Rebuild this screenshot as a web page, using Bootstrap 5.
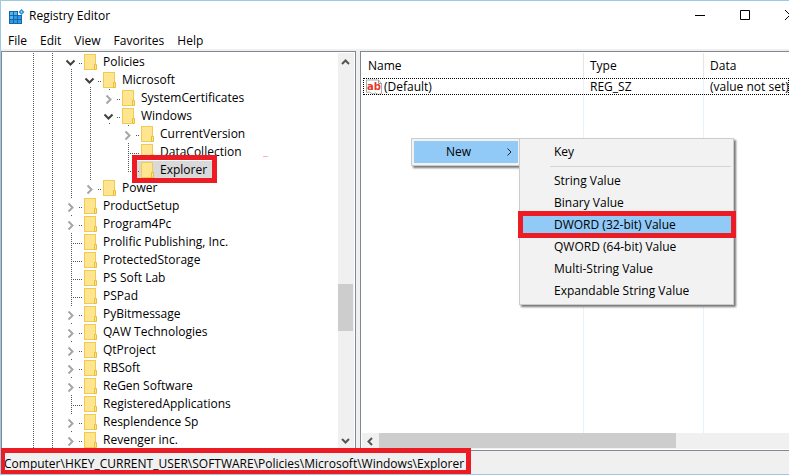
<!DOCTYPE html>
<html lang="en">
<head>
<meta charset="utf-8">
<meta name="viewport" content="width=device-width, initial-scale=1">
<title>Registry Editor</title>
<link href="https://cdn.jsdelivr.net/npm/bootstrap@5.3.0/dist/css/bootstrap.min.css" rel="stylesheet">
<style>
  :root { --line: #828790; --face: #f0f0f0; --hot: #91c9f7; --mark: #ed1c24; }
  body { font: 12px/18px "Open Sans", "Noto Sans", sans-serif; color: #000; background: #fff; }
  .app { border: 1px solid #9fc9e0; border-right: 0; }
  .title-bar { height: 30px; padding-left: 8px; }
  .title-text { font-size: 12px; line-height: 18px; font-weight: 400; padding-top: 6px; }
  .win-controls { margin-right: -23px; }
  .win-btn { width: 45px; height: 28px; border: 0; background: none; padding: 0; display: grid; place-items: center; }
  .menu-bar { height: 18px; padding-left: 7px; gap: 13px; line-height: 20px; }
  .menu-bar a { color: #000; text-decoration: none; }
  .panes { border-top: 2px solid var(--face); min-height: 0; }
  .tree-pane { width: 355px; border: 1px solid var(--line); border-bottom: 0; }
  .tree { padding: 1px 0 0 22px; }
  .tree-row { height: 18px; position: relative; }
  .guide { width: 19px; height: 18px; flex: none; }
  .guide.dots { background: repeating-linear-gradient(#555 0 1px, transparent 1px 2px) 9px 0 / 1px 100% no-repeat; }
  .twist { width: 22px; height: 18px; flex: none; }
  .folder { width: 14px; height: 18px; flex: none; }
  .tree-row .name { padding: 0 5px; }
  .selected-name, .selected-row .folder { background: #d9d9d9; }
  .selected-row .twist { background: linear-gradient(#d9d9d9, #d9d9d9) right / 4px 100% no-repeat; }
  .v-track { width: 17px; background: var(--face); border-right: 1px solid #fff; margin: 1px 0; }
  .scroll-btn { border: 0; padding: 0; background: var(--face); display: grid; place-items: center; flex: none; }
  .v-track .scroll-btn { width: 15px; height: 17px; }
  .v-thumb { height: 47px; width: 15px; background: #cdcdcd; }
  .v-before { flex: 214 1 0; }
  .v-after { flex: 101 1 0; }
  .splitter { width: 4px; background: var(--face); }
  .list-pane { border: 1px solid var(--line); border-right: 0; border-bottom: 0; padding-top: 1px; }
  .values { padding-left: 2px; background: linear-gradient(#e8f2fb, #e8f2fb) 222px 0 / 1px 100% no-repeat, linear-gradient(#e8f2fb, #e8f2fb) 342px 0 / 1px 100% no-repeat; }
  .values table { width: 100%; table-layout: fixed; border-collapse: separate; border-spacing: 0; }
  .values th { font-weight: 400; height: 25px; padding: 0 6px; border-right: 1px solid #e5e5e5; background: #fff; }
  .values th:first-child { padding-left: 5px; }
  .values th:last-child { border-right: 0; }
  .values td { height: 17px; line-height: 16px; padding: 0 6px; white-space: nowrap; }
  .values td:first-child { padding-left: 3px; }
  .value-icon { margin-right: 2px; }
  .col-name { width: 221px; }
  .col-type { width: 120px; }
  .value-row { outline: 1px dotted #000; outline-offset: -1px; }
  .h-track { height: 16px; background: var(--face); margin: 0 0 1px 1px; }
  .h-track .scroll-btn { width: 17px; height: 16px; }
  .h-thumb { width: 297px; height: 15px; background: #cdcdcd; }
  .status { height: 24px; border-top: 1px solid var(--line); background: var(--face); padding: 4px 4px 0 3px; position: relative; }
  .mark-box { position: absolute; border: 5px solid var(--mark); pointer-events: none; }
  .status-path { position: relative; }
  .status .mark-box { inset: -7px -7px -1px -4px; }
  .selected-row .mark-box { left: 108px; top: -6px; width: 85px; height: 28px; }
  .pink-dash { position: absolute; left: 239px; top: 13px; width: 5px; height: 1px; background: #f5b5b5; }
  .popup { position: absolute; background: #f2f2f2; border: 1px solid #ccc; box-shadow: 2px 2px 2px #777; }
  .popup-new { left: 50px; top: 86px; width: 110px; padding: 2px; }
  .popup-values { left: 158px; top: 86px; width: 215px; padding: 2px; }
  .popup button { display: block; width: 100%; height: 22px; border: 0; background: none; color: #000; padding: 0 0 0 32px; text-align: left; position: relative; }
  .popup button.hot { background: var(--hot); }
  .popup hr { margin: 3px 0 3px 28px; border-top: 1px solid #d5d5d5; opacity: 1; }
  .popup button .mark-box { inset: -3px -5px -2px -4px; }
</style>
</head>
<body>
<svg class="d-none" xmlns="http://www.w3.org/2000/svg">
  <symbol id="folder" viewBox="0 0 14 18">
    <rect x="0.500" y="1.500" width="11" height="15" fill="#ffe58f" stroke="#efcb53"/>
    <path d="M10.500 11.500h2v5h-2z" fill="#ffe58f" stroke="#e8bd38"/>
  </symbol>
  <symbol id="open" viewBox="0 0 22 18">
    <path d="M4.500 7.500l4 4 4-4" fill="none" stroke="#404040" stroke-width="2"/>
    <path d="M17 10.500h4M9.500 16v2" stroke="#555" stroke-dasharray="1 1"/>
  </symbol>
  <symbol id="closed" viewBox="0 0 22 18">
    <path d="M6.500 6.500l4 4-4 4" fill="none" stroke="#a6a6a6" stroke-width="2"/>
    <path d="M17 10.500h4M9.500 0v2" stroke="#555" stroke-dasharray="1 1"/>
  </symbol>
  <symbol id="leaf" viewBox="0 0 22 18">
    <path d="M9.500 0v18M11 10.500h10" stroke="#555" stroke-dasharray="1 1"/>
  </symbol>
  <symbol id="leaf-end" viewBox="0 0 22 18">
    <path d="M9.500 0v11M11 10.500h10" stroke="#555" stroke-dasharray="1 1"/>
  </symbol>
</svg>

<div class="app vh-100 d-flex flex-column overflow-hidden">
  <header class="title-bar d-flex align-items-start flex-shrink-0">
    <svg class="mt-2 me-1" width="16" height="16" viewBox="0 0 16 16" aria-hidden="true">
      <path d="M0 2h9v4h4v9H0z" fill="#1767a8"/>
      <path d="M1 3h3v3H1zM5 3h3v3H5zM1 7h3v3H1z" fill="#55b4f0"/>
      <path d="M5 7h3v3H5zM9 7h3v3H9zM1 11h3v3H1zM5 11h3v3H5zM9 11h3v3H9z" fill="#2f9be6"/>
      <path d="M12.500 0l3 3-3 3-3-3z" fill="#2b8fd6"/><path d="M12.500 2l1 1-1 1-1-1z" fill="#bfe3fa"/>
    </svg>
    <h1 class="title-text flex-grow-1 m-0">Registry Editor</h1>
    <div class="win-controls d-flex flex-shrink-0">
      <button class="win-btn" aria-label="Minimize"><svg width="10" height="10"><path d="M0 5.500h10" stroke="#000"/></svg></button>
      <button class="win-btn" aria-label="Maximize"><svg width="10" height="10"><path d="M.5.5h9v9h-9z" fill="none" stroke="#000"/></svg></button>
      <button class="win-btn" aria-label="Close"><svg width="10" height="10"><path d="M0 0l10 10M10 0L0 10" stroke="#000"/></svg></button>
    </div>
  </header>
  <nav class="menu-bar d-flex flex-shrink-0">
    <a href="#">File</a><a href="#">Edit</a><a href="#">View</a><a href="#">Favorites</a><a href="#">Help</a>
  </nav>

  <main class="panes d-flex flex-grow-1">
    <section class="tree-pane d-flex flex-shrink-0 overflow-hidden">
      <div class="tree flex-grow-1">
        <div class="tree-row d-flex"><i class="guide dots"></i><i class="guide dots"></i><svg class="twist"><use href="#open"/></svg><svg class="folder"><use href="#folder"/></svg><span class="name">Policies</span></div>
        <div class="tree-row d-flex"><i class="guide dots"></i><i class="guide dots"></i><i class="guide dots"></i><svg class="twist"><use href="#open"/></svg><svg class="folder"><use href="#folder"/></svg><span class="name">Microsoft</span></div>
        <div class="tree-row d-flex"><i class="guide dots"></i><i class="guide dots"></i><i class="guide dots"></i><i class="guide dots"></i><svg class="twist"><use href="#closed"/></svg><svg class="folder"><use href="#folder"/></svg><span class="name">SystemCertificates</span></div>
        <div class="tree-row d-flex"><i class="guide dots"></i><i class="guide dots"></i><i class="guide dots"></i><i class="guide dots"></i><svg class="twist"><use href="#open"/></svg><svg class="folder"><use href="#folder"/></svg><span class="name">Windows</span></div>
        <div class="tree-row d-flex"><i class="guide dots"></i><i class="guide dots"></i><i class="guide dots"></i><i class="guide dots"></i><i class="guide"></i><svg class="twist"><use href="#closed"/></svg><svg class="folder"><use href="#folder"/></svg><span class="name">CurrentVersion</span></div>
        <div class="tree-row d-flex"><i class="guide dots"></i><i class="guide dots"></i><i class="guide dots"></i><i class="guide dots"></i><i class="guide"></i><svg class="twist"><use href="#leaf"/></svg><svg class="folder"><use href="#folder"/></svg><span class="name">DataCollection</span><i class="pink-dash"></i></div>
        <div class="tree-row d-flex selected-row"><i class="guide dots"></i><i class="guide dots"></i><i class="guide dots"></i><i class="guide dots"></i><i class="guide"></i><svg class="twist"><use href="#leaf-end"/></svg><svg class="folder"><use href="#folder"/></svg><span class="name selected-name">Explorer</span><i class="mark-box"></i></div>
        <div class="tree-row d-flex"><i class="guide dots"></i><i class="guide dots"></i><i class="guide dots"></i><svg class="twist"><use href="#closed"/></svg><svg class="folder"><use href="#folder"/></svg><span class="name">Power</span></div>
        <div class="tree-row d-flex"><i class="guide dots"></i><i class="guide dots"></i><svg class="twist"><use href="#closed"/></svg><svg class="folder"><use href="#folder"/></svg><span class="name">ProductSetup</span></div>
        <div class="tree-row d-flex"><i class="guide dots"></i><i class="guide dots"></i><svg class="twist"><use href="#closed"/></svg><svg class="folder"><use href="#folder"/></svg><span class="name">Program4Pc</span></div>
        <div class="tree-row d-flex"><i class="guide dots"></i><i class="guide dots"></i><svg class="twist"><use href="#leaf"/></svg><svg class="folder"><use href="#folder"/></svg><span class="name">Prolific Publishing, Inc.</span></div>
        <div class="tree-row d-flex"><i class="guide dots"></i><i class="guide dots"></i><svg class="twist"><use href="#leaf"/></svg><svg class="folder"><use href="#folder"/></svg><span class="name">ProtectedStorage</span></div>
        <div class="tree-row d-flex"><i class="guide dots"></i><i class="guide dots"></i><svg class="twist"><use href="#leaf"/></svg><svg class="folder"><use href="#folder"/></svg><span class="name">PS Soft Lab</span></div>
        <div class="tree-row d-flex"><i class="guide dots"></i><i class="guide dots"></i><svg class="twist"><use href="#leaf"/></svg><svg class="folder"><use href="#folder"/></svg><span class="name">PSPad</span></div>
        <div class="tree-row d-flex"><i class="guide dots"></i><i class="guide dots"></i><svg class="twist"><use href="#closed"/></svg><svg class="folder"><use href="#folder"/></svg><span class="name">PyBitmessage</span></div>
        <div class="tree-row d-flex"><i class="guide dots"></i><i class="guide dots"></i><svg class="twist"><use href="#closed"/></svg><svg class="folder"><use href="#folder"/></svg><span class="name">QAW Technologies</span></div>
        <div class="tree-row d-flex"><i class="guide dots"></i><i class="guide dots"></i><svg class="twist"><use href="#closed"/></svg><svg class="folder"><use href="#folder"/></svg><span class="name">QtProject</span></div>
        <div class="tree-row d-flex"><i class="guide dots"></i><i class="guide dots"></i><svg class="twist"><use href="#closed"/></svg><svg class="folder"><use href="#folder"/></svg><span class="name">RBSoft</span></div>
        <div class="tree-row d-flex"><i class="guide dots"></i><i class="guide dots"></i><svg class="twist"><use href="#closed"/></svg><svg class="folder"><use href="#folder"/></svg><span class="name">ReGen Software</span></div>
        <div class="tree-row d-flex"><i class="guide dots"></i><i class="guide dots"></i><svg class="twist"><use href="#leaf"/></svg><svg class="folder"><use href="#folder"/></svg><span class="name">RegisteredApplications</span></div>
        <div class="tree-row d-flex"><i class="guide dots"></i><i class="guide dots"></i><svg class="twist"><use href="#closed"/></svg><svg class="folder"><use href="#folder"/></svg><span class="name">Resplendence Sp</span></div>
        <div class="tree-row d-flex"><i class="guide dots"></i><i class="guide dots"></i><svg class="twist"><use href="#closed"/></svg><svg class="folder"><use href="#folder"/></svg><span class="name">Revenger inc.</span></div>
      </div>
      <div class="v-track d-flex flex-column">
        <button class="scroll-btn" aria-label="Scroll up"><svg width="9" height="6"><path d="M1 5l3.500-3.500L8 5" fill="none" stroke="#555" stroke-width="2"/></svg></button>
        <div class="v-before"></div><div class="v-thumb"></div><div class="v-after"></div>
        <button class="scroll-btn" aria-label="Scroll down"><svg width="9" height="6"><path d="M1 1l3.500 3.500L8 1" fill="none" stroke="#555" stroke-width="2"/></svg></button>
      </div>
    </section>
    <div class="splitter flex-shrink-0"></div>
    <section class="list-pane d-flex flex-column flex-grow-1 position-relative">
      <div class="values flex-grow-1">
        <table>
          <colgroup><col class="col-name"><col class="col-type"><col></colgroup>
          <thead><tr><th>Name</th><th>Type</th><th>Data</th></tr></thead>
          <tbody>
            <tr class="value-row">
              <td><svg width="16" height="16" viewBox="0 0 16 16" class="value-icon align-top" aria-label="String value" role="img"><path d="M.5 1v12.500l3-.5 3 2 3-1 3 1.500 3-1V4.500l-3-3.500z" fill="#fff" stroke="#aaa"/><path d="M12.500 1v3.500h3" fill="none" stroke="#999"/><text x="1" y="11" font-family="DejaVu Sans" font-weight="700" font-size="10" fill="#e8362b">ab</text></svg>(Default)</td>
              <td>REG_SZ</td><td>(value not set)</td>
            </tr>
          </tbody>
        </table>
      </div>
      <div class="h-track d-flex">
        <button class="scroll-btn" aria-label="Scroll left"><svg width="7" height="9"><path d="M5 1L1.500 4.500 5 8" fill="none" stroke="#555" stroke-width="2"/></svg></button>
        <div class="h-thumb"></div>
      </div>
      <div class="popup popup-new" role="menu">
        <button class="hot" role="menuitem">New<svg class="position-absolute end-0 top-50 translate-middle-y me-1" width="8" height="9"><path d="M1.500 1l3.500 3.500L1.500 8" fill="none" stroke="#222"/></svg></button>
      </div>
      <div class="popup popup-values" role="menu">
        <button role="menuitem">Key</button>
        <hr>
        <button role="menuitem">String Value</button>
        <button role="menuitem">Binary Value</button>
        <button class="hot" role="menuitem">DWORD (32-bit) Value<i class="mark-box"></i></button>
        <button role="menuitem">QWORD (64-bit) Value</button>
        <button role="menuitem">Multi-String Value</button>
        <button role="menuitem">Expandable String Value</button>
      </div>
    </section>
  </main>

  <footer class="status d-flex flex-shrink-0"><span class="status-path">Computer\HKEY_CURRENT_USER\SOFTWARE\Policies\Microsoft\Windows\Explorer<i class="mark-box"></i></span></footer>
</div>
<script src="https://cdn.jsdelivr.net/npm/bootstrap@5.3.0/dist/js/bootstrap.bundle.min.js"></script>
</body>
</html>
